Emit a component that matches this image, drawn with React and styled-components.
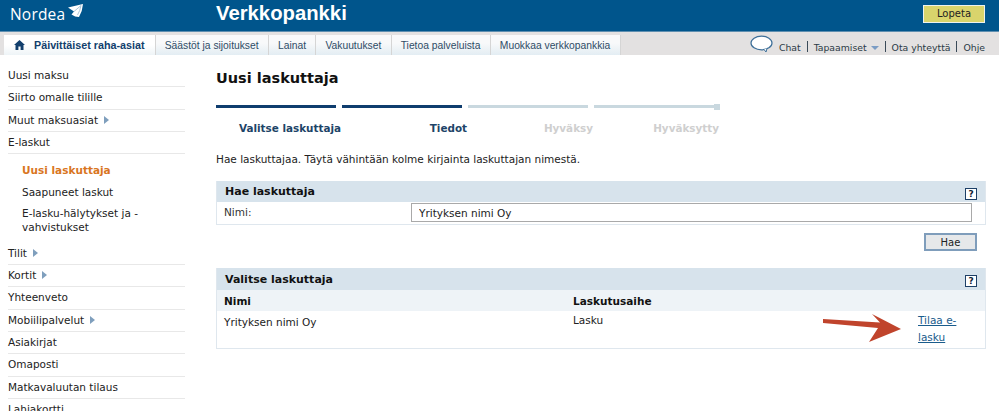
import styled, { createGlobalStyle } from "styled-components";

const GlobalStyle = createGlobalStyle`
    html, body {
        margin: 0;
        padding: 0;
        background: white;
        overflow: hidden;
    }
    body {
        font-family: "DejaVu Sans", Verdana, sans-serif;
        font-size: 10.5px;
        color: #222;
    }
`

const menuTop = [
    { label: "Uusi maksu" },
    { label: "Siirto omalle tilille" },
    { label: "Muut maksuasiat", more: true },
    { label: "E-laskut" },
];
const menuSub = [
    { label: "Uusi laskuttaja", active: true },
    { label: "Saapuneet laskut" },
    { label: "E-lasku-hälytykset ja - vahvistukset" },
];
const menuBottom = [
    { label: "Tilit", more: true },
    { label: "Kortit", more: true },
    { label: "Yhteenveto" },
    { label: "Mobiilipalvelut", more: true },
    { label: "Asiakirjat" },
    { label: "Omaposti" },
    { label: "Matkavaluutan tilaus" },
    { label: "Lahjakortti" },
];
const tabs = ["Säästöt ja sijoitukset", "Lainat", "Vakuutukset", "Tietoa palveluista", "Muokkaa verkkopankkia"];
const steps = [
    { label: "Valitse laskuttaja", done: true },
    { label: "Tiedot", done: true },
    { label: "Hyväksy" },
    { label: "Hyväksytty", last: true },
];

const MenuItem = ({ item }) => (
    <Item>
        {item.label}
        {item.more && <Caret />}
    </Item>
);

const App = () => {
    return (
        <Page>
            <GlobalStyle />
            <Header>
                <Logo>
                    <LogoText>Nordea</LogoText>
                    <LogoSail width="15" height="14" viewBox="0 0 15 14">
                        <path d="M0 3.5 L15 0 Q14.5 7 11 13 Q7 13 3.5 10.5 L6 7.5 Z" fill="white" />
                        <path d="M6 7.5 L13 1.5 Q12 7 9.5 11" fill="none" stroke="#a9c6da" strokeWidth="1" />
                    </LogoSail>
                </Logo>
                <Brand>Verkkopankki</Brand>
                <Logout>Lopeta</Logout>
            </Header>
            <NavBar>
                <Tabs>
                    <ActiveTab>
                        <svg width="11" height="10" viewBox="0 0 11 10">
                            <path d="M5.5 0 L11 5 L9.5 5 L9.5 10 L6.6 10 L6.6 6.5 L4.4 6.5 L4.4 10 L1.5 10 L1.5 5 L0 5 Z" fill="#123f6d" />
                        </svg>
                        Päivittäiset raha-asiat
                    </ActiveTab>
                    {tabs.map((tab) => <Tab key={tab}>{tab}</Tab>)}
                </Tabs>
                <Tools>
                    <svg width="23" height="18" viewBox="0 0 23 18">
                        <ellipse cx="11.5" cy="8" rx="10.5" ry="6.8" fill="white" stroke="#3d6f99" strokeWidth="1.2" />
                        <path d="M14 14.5 L16 17 L17 13.5" fill="white" stroke="#3d6f99" strokeWidth="1" />
                    </svg>
                    <ToolLink>Chat</ToolLink>
                    <Divider />
                    <ToolLink>Tapaamiset<DownCaret /></ToolLink>
                    <Divider />
                    <ToolLink>Ota yhteyttä</ToolLink>
                    <Divider />
                    <ToolLink>Ohje</ToolLink>
                </Tools>
            </NavBar>
            <Body>
                <Sidebar>
                    {menuTop.map((item) => <MenuItem key={item.label} item={item} />)}
                    <SubMenu>
                        {menuSub.map((item) => (
                            <SubItem key={item.label} $active={item.active}>{item.label}</SubItem>
                        ))}
                    </SubMenu>
                    {menuBottom.map((item) => <MenuItem key={item.label} item={item} />)}
                </Sidebar>
                <Main>
                    <Title>Uusi laskuttaja</Title>
                    <Steps>
                        {steps.map((step) => (
                            <Step key={step.label} $done={step.done} $last={step.last}>
                                <StepLabel $done={step.done}>{step.label}</StepLabel>
                            </Step>
                        ))}
                    </Steps>
                    <Intro>Hae laskuttajaa. Täytä vähintään kolme kirjainta laskuttajan nimestä.</Intro>
                    <Panel>
                        <PanelHeader>
                            Hae laskuttaja
                            <Help>?</Help>
                        </PanelHeader>
                        <FormRow>
                            <FormLabel>Nimi:</FormLabel>
                            <NameInput readOnly value="Yrityksen nimi Oy" />
                        </FormRow>
                    </Panel>
                    <ButtonRow>
                        <SearchButton>Hae</SearchButton>
                    </ButtonRow>
                    <Panel>
                        <PanelHeader $tall>
                            Valitse laskuttaja
                            <Help>?</Help>
                        </PanelHeader>
                        <ColumnRow>
                            <div>Nimi</div>
                            <div>Laskutusaihe</div>
                        </ColumnRow>
                        <ResultRow>
                            <ResultName>Yrityksen nimi Oy</ResultName>
                            <div>Lasku</div>
                            <OrderLink>Tilaa e-lasku</OrderLink>
                            <Arrow width="80" height="30" viewBox="0 0 80 30">
                                <path d="M0 6 L57 9.5 L49 1 L78 16 L46 29 L55 15 L0 10 Z" fill="#c0442c" />
                            </Arrow>
                        </ResultRow>
                    </Panel>
                </Main>
            </Body>
        </Page>
    );
}

const Page = styled.div`
    width: 999px;
    height: 411px;
    overflow: hidden;
`

const Header = styled.div`
    height: 32px;
    background: #00558c;
    border-bottom: 1px solid #5f8fb0;
    box-sizing: border-box;
    display: flex;
    align-items: center;
    padding: 0 14px 0 10px;
`

const Logo = styled.div`
    width: 206px;
    display: flex;
    align-items: flex-start;
    gap: 3px;
    margin-top: -3px;
`

const LogoText = styled.div`
    font-family: "Open Sans", sans-serif;
    font-size: 15.5px;
    letter-spacing: 0.2px;
    color: white;
    line-height: 18px;
`

const LogoSail = styled.svg`
    margin-top: -1px;
`

const Brand = styled.div`
    flex: 1;
    font-family: "Liberation Sans", Arial, sans-serif;
    font-weight: 700;
    font-size: 20.3px;
    color: white;
    margin-top: -5px;
`

const Logout = styled.button`
    width: 62px;
    height: 18px;
    margin-top: -4px;
    padding: 0;
    background: #d9d46c;
    border: 1px solid #eef2ee;
    font-family: "DejaVu Sans", sans-serif;
    font-size: 10px;
    color: #222;
`

const NavBar = styled.div`
    height: 23px;
    background: #e3e1e1;
    display: flex;
    justify-content: space-between;
    padding: 0 14px 0 4px;
`

const Tabs = styled.div`
    display: flex;
    align-items: flex-end;
`

const Tab = styled.div`
    height: 20px;
    padding: 0 9.2px;
    display: flex;
    align-items: center;
    font-family: "Liberation Sans", Arial, sans-serif;
    font-size: 10.3px;
    color: #2f4c66;
    background: linear-gradient(#f8f9fa 40%, #e3edf3);
    border-right: 1px solid #d5d5d5;
`

const ActiveTab = styled(Tab)`
    gap: 9px;
    padding: 0 10px 0 10px;
    font-weight: 700;
    font-size: 10.75px;
    color: #123f6d;
    background: linear-gradient(white 50%, #eef4f7);
`

const Tools = styled.div`
    display: flex;
    align-items: center;
    gap: 6px;
    font-size: 9.3px;
    color: #2b3a46;
`

const ToolLink = styled.div`
    display: flex;
    align-items: center;
    margin-top: 7px;
`

const DownCaret = styled.span`
    width: 0;
    height: 0;
    margin: 2px 0 0 4px;
    border-left: 4px solid transparent;
    border-right: 4px solid transparent;
    border-top: 4px solid #7a9cc4;
`

const Divider = styled.span`
    width: 1px;
    height: 11px;
    margin-top: 6px;
    background: #3a4a58;
`

const Body = styled.div`
    display: flex;
`

const Sidebar = styled.div`
    width: 177px;
    margin: 10px 31px 0 8px;
    flex: none;
`

const Item = styled.div`
    height: 22.33px;
    box-sizing: border-box;
    padding-top: 3px;
    line-height: 15px;
    border-bottom: 1px solid #e8e8e8;
    display: flex;
    align-items: flex-start;
`

const Caret = styled.span`
    width: 0;
    height: 0;
    margin: 3px 0 0 6px;
    border-top: 4px solid transparent;
    border-bottom: 4px solid transparent;
    border-left: 5px solid #7f9fbd;
`

const SubMenu = styled.div`
    padding: 6px 0 4px 14px;
`

const SubItem = styled.div`
    padding: 3px 0 4.5px;
    line-height: 14px;
    font-weight: ${(props) => (props.$active ? 700 : 400)};
    color: ${(props) => (props.$active ? "#d9761f" : "#222")};
`

const Main = styled.div`
    width: 770px;
    flex: none;
`

const Title = styled.div`
    margin-top: 14px;
    font-size: 14.5px;
    font-weight: 700;
    line-height: 18px;
    color: #111;
`

const Steps = styled.div`
    display: grid;
    grid-template-columns: repeat(4, 126px);
    width: 504px;
    margin-top: 18px;
`

const Step = styled.div`
    position: relative;
    border-top: 3px solid ${(props) => (props.$done ? "#0f3d6e" : "#c9d8df")};
    margin-right: 6px;
    &::after {
        content: "";
        display: ${(props) => (props.$last ? "block" : "none")};
        position: absolute;
        right: -6px;
        top: -4px;
        width: 6px;
        height: 6px;
        background: #c9d8df;
    }
`

const StepLabel = styled.div`
    margin-right: -5px;
    padding-top: 12px;
    text-align: right;
    font-size: 10.4px;
    font-weight: 700;
    line-height: 16px;
    color: ${(props) => (props.$done ? "#1d4468" : "#cfcfcf")};
`

const Intro = styled.div`
    margin-top: 15px;
    line-height: 16px;
    height: 30px;
`

const Panel = styled.div`
    border: 1px solid #dfe7ee;
    border-top: none;
`

const PanelHeader = styled.div`
    height: ${(props) => (props.$tall ? "22px" : "21px")};
    background: #d7e3ec;
    padding: 0 8px;
    display: flex;
    align-items: center;
    justify-content: space-between;
    font-size: 11px;
    font-weight: 700;
    color: #111;
`

const Help = styled.span`
    width: 10px;
    height: 10px;
    margin: 4px 0 0;
    background: white;
    border: 1px solid #1d3f66;
    display: flex;
    align-items: center;
    justify-content: center;
    font-size: 9px;
    color: #123;
`

const FormRow = styled.div`
    height: 22px;
    padding: 1px 13px 0 7px;
    box-sizing: border-box;
    display: flex;
    align-items: flex-start;
`

const FormLabel = styled.div`
    width: 187px;
    padding-top: 2px;
    line-height: 15px;
    color: #333;
`

const NameInput = styled.input`
    flex: 1;
    height: 19px;
    box-sizing: border-box;
    padding: 0 7px;
    border: 1px solid #a9a9a9;
    font-family: "DejaVu Sans", sans-serif;
    font-size: 10.5px;
    color: #222;
    outline: none;
`

const ButtonRow = styled.div`
    height: 43px;
    padding: 8px 9px 0 0;
    box-sizing: border-box;
    display: flex;
    justify-content: flex-end;
`

const SearchButton = styled.button`
    width: 53px;
    height: 18px;
    padding: 0;
    background: #e6e8ea;
    border: 2px solid #7f9dbb;
    font-family: "DejaVu Sans", sans-serif;
    font-size: 10px;
    color: #222;
`

const ColumnRow = styled.div`
    height: 21px;
    padding: 0 7px;
    background: #eef3f7;
    display: grid;
    grid-template-columns: 349px 1fr;
    align-items: center;
    font-weight: 700;
    color: #111;
`

const ResultRow = styled.div`
    position: relative;
    height: 36px;
    padding: 1px 10px 0 7px;
    display: grid;
    grid-template-columns: 349px 1fr 57px;
    align-items: start;
    line-height: 17px;
`

const ResultName = styled.div`
    margin-top: 2px;
`

const OrderLink = styled.a`
    color: #1a5c8c;
    text-decoration: underline;
`

const Arrow = styled.svg`
    position: absolute;
    left: 606px;
    top: 2px;
`

export default App;
